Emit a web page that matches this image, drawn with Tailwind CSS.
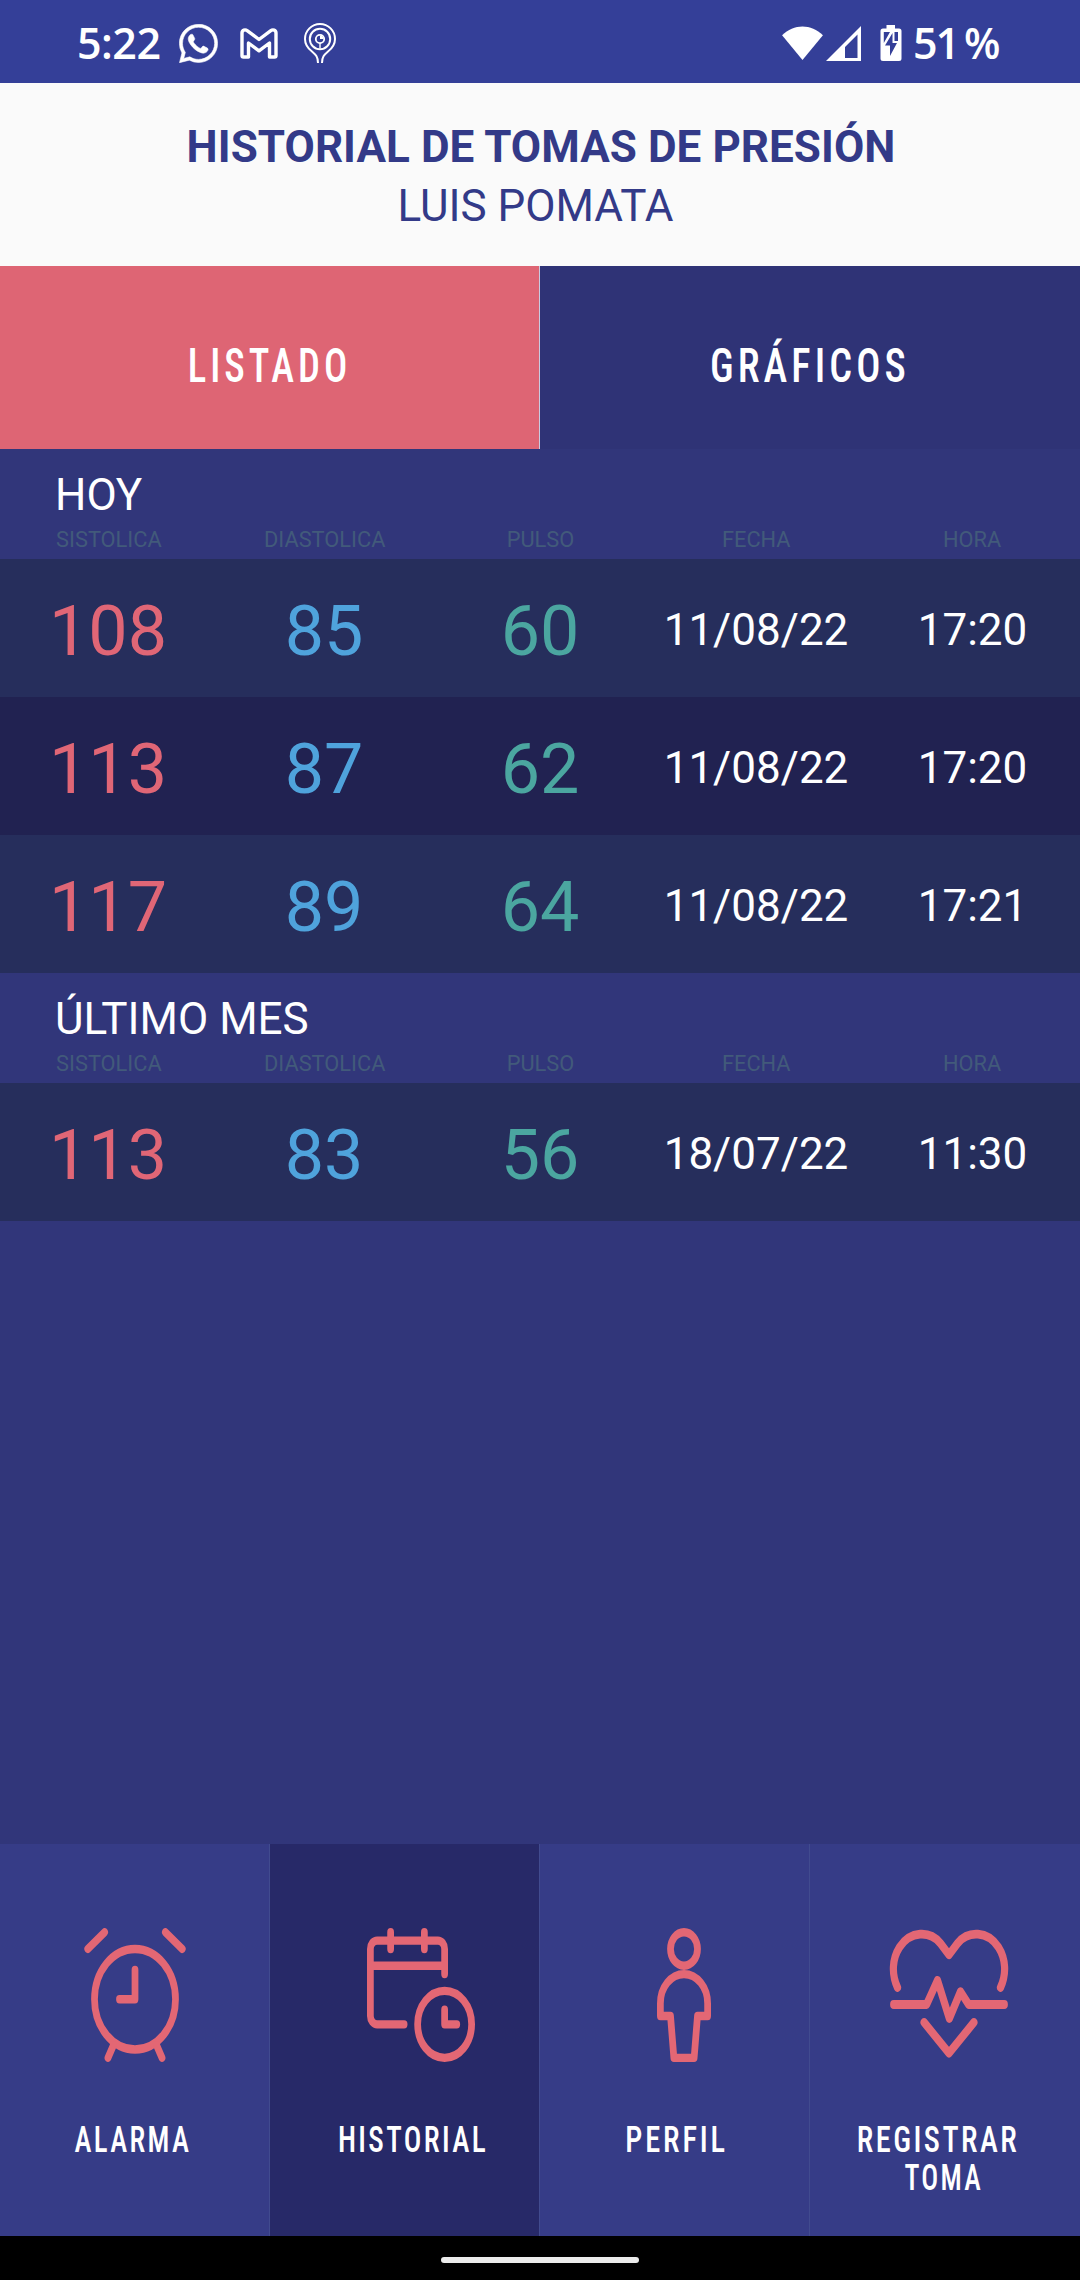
<!DOCTYPE html>
<html lang="es">
<head>
<meta charset="utf-8">
<title>Historial de tomas de presión</title>
<script src="https://cdn.jsdelivr.net/npm/@tailwindcss/browser@4"></script>
</head>
<body class="w-[1080px] h-[2280px] flex flex-col overflow-hidden bg-[#31367a] font-['Roboto',sans-serif] text-white">

<!-- Status bar -->
<div class="h-[83px] shrink-0 bg-[#343f98] flex items-center pt-[3px]">
  <span class="ml-[77px] w-[102px] -mt-[2px] font-['Open_Sans',sans-serif] font-semibold text-[43px] leading-none tracking-[-0.5px]">5:22</span>
  <svg class="w-[39px] h-[39px]" viewBox="0 0 24 24" fill="#fff" stroke="#fff" stroke-width=".35" preserveAspectRatio="none"><path d="M.3 23.800l1.500-6a11.867 11.867 0 0 1-1.587-5.946C.26 5.335 5.495.2 12.050.2a11.817 11.817 0 0 1 8.300 3.400 11.824 11.824 0 0 1 3.400 8.300c-.003 6.557-5.238 11.800-11.700 11.800a11.900 11.900 0 0 1-5.688-1.448L.3 23.800zm6.354-3.607c1.676.995 3.276 1.591 5.392 1.592 5.448 0 9.886-4.434 9.889-9.885.002-5.462-4.415-9.890-9.881-9.892-5.452 0-9.887 4.434-9.889 9.884-.001 2.225.651 3.891 1.746 5.634l-.999 3.648 3.742-.981z"/><path d="M8.700 6.900c-.3-.6-.5-.6-.9-.6-.5 0-.9.2-1.300.7-.6.7-.9 1.500-.8 2.500.2 1.300.9 2.400 1.700 3.500 1.500 2 3.300 3.600 5.700 4.500 1.400.6 2.700.6 3.800-.2.700-.5 1-1.200 1-2-.1-.4-2.700-1.700-3-1.700-.5 0-1.100 1.400-1.600 1.400-.9 0-4.100-2.700-4.500-4.100-.1-.5 1.100-1.200.9-1.900z"/></svg>
  <svg class="w-[38px] h-[31px] ml-[22px]" viewBox="0 0 38 31" fill="none" stroke="#fff" stroke-width="3.400" stroke-linejoin="round"><path d="M2 5v22.500a1.500 1.500 0 0 0 1.500 1.500H8.500V15L19 22.800 29.500 15v14h5a1.500 1.500 0 0 0 1.500-1.500V5c0-3-3-4-5.500-2.200L19 11.500 7.500 2.800C5 1 2 2 2 5z"/></svg>
  <svg class="w-[32px] h-[41px] ml-[26px]" viewBox="0 0 32 41" fill="none" stroke="#fff" stroke-width="2"><path d="M14 40c0-6-2-8-6-11.500C3.500 25 1 21.500 1 16a15 15 0 0 1 30 0c0 5.500-2.500 9-7 12.500C20 32 18 34 18 40"/><circle cx="16" cy="16" r="10.200"/><circle cx="16" cy="16" r="4.200" stroke-width="1.800"/><path d="M16 20v5.500" stroke-width="1.400"/><path d="M16 16v-3.500a3.500 3.500 0 0 1 3.500 3.500z" fill="#fff" stroke="none"/></svg>
  <svg class="w-[41px] h-[35px] ml-[446px]" viewBox="0 0 42 36" fill="#fff"><path d="M0 9.500C12-2.500 30-2.500 42 9.500L21 35z"/></svg>
  <svg class="w-[35px] h-[35px] ml-[3px]" viewBox="0 0 35 35"><path fill="#fff" fill-rule="evenodd" d="M35 0v35H0zM31.500 8.500L19 21v11h12.500z"/></svg>
  <svg class="w-[22px] h-[36px] ml-[19px]" viewBox="0 0 22 36"><path fill="#fff" d="M6.500 0h8.500v3.500h4a2.500 2.500 0 0 1 2.500 2.500v27.500a2.500 2.500 0 0 1-2.500 2.500H3a2.500 2.500 0 0 1-2.500-2.500V6A2.500 2.500 0 0 1 3 3.500h3.500z"/><path fill="#343f98" d="M3.800 7H10L3.800 18zM14.500 7H18v9h-3.500zM12.500 8L5 20.500h5V31l7-13h-4.500z"/></svg>
  <span class="ml-[11px] w-[51px] -mt-[2px] font-['Open_Sans',sans-serif] font-semibold text-[43px] leading-none tracking-[-2px]">51</span>
  <span class="inline-block origin-left scale-x-[.98] -mt-[2px] font-['Open_Sans',sans-serif] font-semibold text-[43px] leading-none">%</span>
</div>

<!-- Title -->
<header class="h-[183px] shrink-0 bg-[#fafafa] text-[#333a88] text-center text-[44px] leading-[59px] pt-[35px]">
  <h1 class="font-bold tracking-[0.05px] pl-[2px]">HISTORIAL DE TOMAS DE PRESIÓN</h1>
  <p class="pr-[9px]">LUIS POMATA</p>
</header>

<!-- Tabs -->
<div class="h-[183px] shrink-0 flex text-[49px] font-medium">
  <div class="w-[540px] bg-[#de6574] border-r border-[#c9cbe0] flex items-center justify-center pt-[17px]"><span class="inline-block font-stretch-condensed scale-x-[.79] tracking-[5px]">LISTADO</span></div>
  <div class="w-[540px] bg-[#2f3376] flex items-center justify-center pt-[17px]"><span class="inline-block font-stretch-condensed scale-x-[.82] tracking-[5px]">GRÁFICOS</span></div>
</div>

<main class="flex-1">
  <section>
    <div class="h-[110px] pt-[20px]">
      <h2 class="pl-[55px] text-[44px] leading-[52px]">HOY</h2>
      <div class="grid grid-cols-5 mt-[6px] pl-px text-center text-[21.800px] leading-[26px] text-[#425a7a]"><span>SISTOLICA</span><span>DIASTOLICA</span><span>PULSO</span><span>FECHA</span><span>HORA</span></div>
    </div>
    <div class="h-[138px] grid grid-cols-5 items-center text-center text-[44px] bg-[#262e5c]">
      <span class="text-[70px] pt-[7px] text-[#e06676]">108</span><span class="text-[70px] pt-[7px] text-[#4fa3dc]">85</span><span class="text-[70px] pt-[7px] text-[#4ba6a0]">60</span><span class="pt-[3px]">11/08/22</span><span class="pt-[3px] pl-px">17:20</span>
    </div>
    <div class="h-[138px] grid grid-cols-5 items-center text-center text-[44px] bg-[#212251]">
      <span class="text-[70px] pt-[7px] text-[#e06676]">113</span><span class="text-[70px] pt-[7px] text-[#4fa3dc]">87</span><span class="text-[70px] pt-[7px] text-[#4ba6a0]">62</span><span class="pt-[3px]">11/08/22</span><span class="pt-[3px] pl-px">17:20</span>
    </div>
    <div class="h-[138px] grid grid-cols-5 items-center text-center text-[44px] bg-[#262e5c]">
      <span class="text-[70px] pt-[7px] text-[#e06676]">117</span><span class="text-[70px] pt-[7px] text-[#4fa3dc]">89</span><span class="text-[70px] pt-[7px] text-[#4ba6a0]">64</span><span class="pt-[3px]">11/08/22</span><span class="pt-[3px] pl-px">17:21</span>
    </div>
  </section>
  <section>
    <div class="h-[110px] pt-[20px]">
      <h2 class="pl-[55px] text-[44px] leading-[52px]">ÚLTIMO MES</h2>
      <div class="grid grid-cols-5 mt-[6px] pl-px text-center text-[21.800px] leading-[26px] text-[#425a7a]"><span>SISTOLICA</span><span>DIASTOLICA</span><span>PULSO</span><span>FECHA</span><span>HORA</span></div>
    </div>
    <div class="h-[138px] grid grid-cols-5 items-center text-center text-[44px] bg-[#262e5c]">
      <span class="text-[70px] pt-[7px] text-[#e06676]">113</span><span class="text-[70px] pt-[7px] text-[#4fa3dc]">83</span><span class="text-[70px] pt-[7px] text-[#4ba6a0]">56</span><span class="pt-[3px]">18/07/22</span><span class="pt-[3px] pl-px">11:30</span>
    </div>
  </section>
</main>

<!-- Bottom navigation -->
<nav class="h-[392px] shrink-0 grid grid-cols-4 bg-[#363c87] text-[37px] leading-[38px] font-medium text-center">
  <div class="border-r border-[#414b8f] pt-[84px] flex flex-col items-center">
    <svg class="w-[108px] h-[134px]" viewBox="0 0 16 16" preserveAspectRatio="none" fill="none" stroke="#e36774" stroke-linecap="round" stroke-linejoin="round"><circle cx="8" cy="8.500" r="6"/><path d="M8 5v3.500H5.700M3.500.5L1 2.500M12.500.5L15 2.500M4.800 14L4 15.500M11.200 14l.8 1.500"/></svg>
    <span class="mt-[59px] -ml-[3px] inline-block font-stretch-condensed scale-x-[.78] tracking-[3px]">ALARMA</span>
  </div>
  <div class="border-r border-[#414b8f] bg-[#272968] pt-[84px] flex flex-col items-center">
    <svg class="w-[108px] h-[134px] ml-[33px]" viewBox="0 0 16 16" preserveAspectRatio="none" fill="none" stroke="#e36774" stroke-linecap="round" stroke-linejoin="round"><path d="M5.500 11.500h-4a1 1 0 0 1-1-1v-8a1 1 0 0 1 1-1h9a1 1 0 0 1 1 1v3M.5 4.500h11M3.500.5v2M8.500.5v2M11.500 9.750v1.750h1.800"/><circle cx="11.500" cy="11.500" r="4"/></svg>
    <span class="mt-[59px] ml-[18px] inline-block font-stretch-condensed scale-x-[.79] tracking-[3px]">HISTORIAL</span>
  </div>
  <div class="border-r border-[#414b8f] pt-[84px] flex flex-col items-center">
    <svg class="w-[108px] h-[134px] ml-[19px]" viewBox="0 0 16 16" preserveAspectRatio="none" fill="none" stroke="#e36774" stroke-linecap="round" stroke-linejoin="round"><circle cx="8" cy="2.500" r="2"/><path d="M4.500 10.500V9a3.500 3.500 0 0 1 7 0v1.500H10l-.5 5h-3l-.5-5z"/></svg>
    <span class="mt-[59px] ml-[5px] inline-block font-stretch-condensed scale-x-[.82] tracking-[3.500px]">PERFIL</span>
  </div>
  <div class="pt-[84px] flex flex-col items-center">
    <svg class="w-[122px] h-[134px] ml-[7px]" viewBox="0 0 18 16" preserveAspectRatio="none" fill="none" stroke="#e36774" stroke-width="1.060" stroke-linecap="round" stroke-linejoin="round"><path d="M1.400 7.100C.5 5.500.6 3.700 1.700 2.300 3.300.3 6.200.3 7.700 1.800L9 3.200l1.300-1.400c1.500-1.500 4.400-1.500 6 .5 1.100 1.400 1.200 3.200.3 4.800M.84 9.130H5.700L7.300 6.250 9.050 10.800 10.700 7.600l1.200 1.530h5.260M5.330 11.270L9 14.950l3.670-3.680"/></svg>
    <span class="mt-[59px] -ml-[14px] inline-block font-stretch-condensed scale-x-[.82] tracking-[3px]">REGISTRAR</span>
    <span class="-ml-[3px] inline-block font-stretch-condensed scale-x-[.76] tracking-[3px]">TOMA</span>
  </div>
</nav>

<!-- Gesture bar -->
<div class="h-[44px] shrink-0 bg-black flex items-start justify-center pt-[21px]"><div class="w-[198px] h-[6px] rounded-full bg-[#ebebeb]"></div></div>
</body>
</html>
